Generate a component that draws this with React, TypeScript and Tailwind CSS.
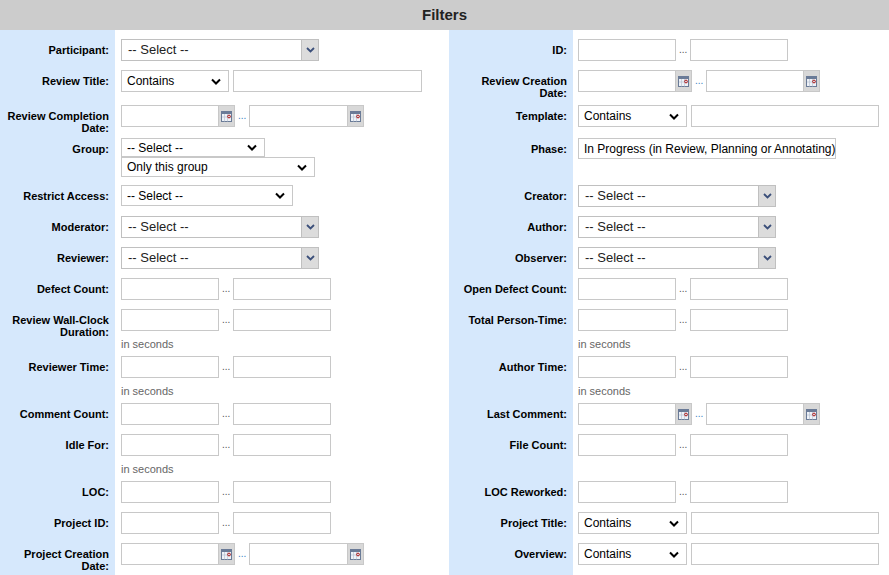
import React from "react";

const F = { fontFamily: '"Liberation Sans", Arial, sans-serif' };

const Txt = ({ w }: { w: number }) => (
  <div className="h-[22px] border border-[#c8c8c8] bg-white shrink-0" style={{ width: w }} />
);
const Dots = ({ blue }: { blue?: boolean }) => (
  <span className={`mx-[3px] text-[10px] leading-[22px] ${blue ? "text-[#3b7fc4]" : "text-[#555]"}`}>...</span>
);
const Range = () => (
  <div className="flex items-start">
    <Txt w={98} />
    <Dots />
    <Txt w={98} />
  </div>
);
const Cal = () => (
  <svg width="11" height="11" viewBox="0 0 11 11">
    <rect x="0.5" y="0.5" width="10" height="10" fill="#eef2f8" stroke="#6a7b97" />
    <rect x="0.5" y="0.5" width="10" height="2.5" fill="#6a7b97" />
    <path d="M3.5 3v7.5M6.5 3v7.5M1 6h9" stroke="#b9c3d3" strokeWidth="0.7" />
    <circle cx="8" cy="5.5" r="1.4" fill="none" stroke="#b01818" strokeWidth="1" />
  </svg>
);
const DateIn = ({ w }: { w: number }) => (
  <div className="flex h-[22px] border border-[#c8c8c8] bg-white shrink-0" style={{ width: w }}>
    <div className="flex-1" />
    <div className="w-[16px] h-full bg-[#d8d8d8] border-l border-[#c8c8c8] flex items-center justify-center">
      <Cal />
    </div>
  </div>
);
const DateRange = ({ a, b }: { a: number; b: number }) => (
  <div className="flex items-start">
    <DateIn w={a} />
    <Dots blue />
    <DateIn w={b} />
  </div>
);
const Chev = () => (
  <svg width="10" height="7" viewBox="0 0 10 7">
    <path d="M1 1.5l4 4 4-4" stroke="#000" strokeWidth="2" fill="none" />
  </svg>
);
const NSel = ({ w, text, h = 22 }: { w: number; text: string; h?: number }) => (
  <div
    className="flex items-center justify-between border border-[#c8c8c8] bg-white pl-[5px] pr-[7px] text-[12px] text-black shrink-0"
    style={{ width: w, height: h }}
  >
    <span className="whitespace-nowrap">{text}</span>
    <Chev />
  </div>
);
const CSel = ({ w }: { w: number }) => (
  <div className="flex h-[22px] border border-[#c0c0c0] bg-white shrink-0" style={{ width: w }}>
    <div className="flex-1 pl-[6px] text-[13px] leading-[20px] text-[#222]">-- Select --</div>
    <div className="w-[17px] h-full bg-[#dcdcdc] border-l border-[#c0c0c0] flex items-center justify-center">
      <svg width="9" height="6" viewBox="0 0 9 6">
        <path d="M1 1l3.5 3.5L8 1" stroke="#3b4f7a" strokeWidth="1.8" fill="none" />
      </svg>
    </div>
  </div>
);
const Secs = () => <div className="text-[11px] text-[#666] mt-[7px] leading-[13px]">in seconds</div>;
const Contains = ({ a, b }: { a: number; b: number }) => (
  <div className="flex gap-[4px]">
    <NSel w={a} text="Contains" />
    <Txt w={b} />
  </div>
);

type Row = { h: number; l: string; lf: React.ReactNode; r: string; rf: React.ReactNode };

const rows: Row[] = [
  { h: 31, l: "Participant:", lf: <CSel w={198} />, r: "ID:", rf: <Range /> },
  { h: 35, l: "Review Title:", lf: <Contains a={108} b={189} />, r: "Review Creation Date:", rf: <DateRange a={114} b={114} /> },
  { h: 33, l: "Review Completion Date:", lf: <DateRange a={114} b={115} />, r: "Template:", rf: <Contains a={109} b={188} /> },
  {
    h: 47,
    l: "Group:",
    lf: (
      <div className="flex flex-col">
        <NSel w={144} h={19} text="-- Select --" />
        <NSel w={194} h={20} text="Only this group" />
      </div>
    ),
    r: "Phase:",
    rf: <NSel w={258} h={21} text="In Progress (in Review, Planning or Annotating)" />,
  },
  { h: 31, l: "Restrict Access:", lf: <NSel w={172} h={21} text="-- Select --" />, r: "Creator:", rf: <CSel w={198} /> },
  { h: 31, l: "Moderator:", lf: <CSel w={198} />, r: "Author:", rf: <CSel w={198} /> },
  { h: 31, l: "Reviewer:", lf: <CSel w={198} />, r: "Observer:", rf: <CSel w={198} /> },
  { h: 31, l: "Defect Count:", lf: <Range />, r: "Open Defect Count:", rf: <Range /> },
  { h: 47, l: "Review Wall-Clock Duration:", lf: <div><Range /><Secs /></div>, r: "Total Person-Time:", rf: <div><Range /><Secs /></div> },
  { h: 47, l: "Reviewer Time:", lf: <div><Range /><Secs /></div>, r: "Author Time:", rf: <div><Range /><Secs /></div> },
  { h: 31, l: "Comment Count:", lf: <Range />, r: "Last Comment:", rf: <DateRange a={114} b={114} /> },
  { h: 47, l: "Idle For:", lf: <div><Range /><Secs /></div>, r: "File Count:", rf: <Range /> },
  { h: 31, l: "LOC:", lf: <Range />, r: "LOC Reworked:", rf: <Range /> },
  { h: 31, l: "Project ID:", lf: <Range />, r: "Project Title:", rf: <Contains a={109} b={188} /> },
  { h: 40, l: "Project Creation Date:", lf: <DateRange a={114} b={115} />, r: "Overview:", rf: <Contains a={109} b={188} /> },
];

const Label = ({ t, w }: { t: string; w: number }) => (
  <div className="bg-[#d6e8fc] shrink-0 text-right text-[11px] font-bold text-black leading-[12px] pr-[6px] pl-[4px] pt-[6px]" style={{ width: w }}>
    {t}
  </div>
);

export default function App() {
  return (
    <div style={F} className="w-[889px] h-[575px] overflow-hidden bg-white">
      <div className="h-[30px] bg-[#cccccc] flex items-center justify-center text-[15px] font-bold text-[#222]">Filters</div>
      <div className="h-[8px] flex">
        <div className="w-[115px] bg-[#d6e8fc]" />
        <div className="w-[334px]" />
        <div className="w-[124px] bg-[#d6e8fc]" />
      </div>
      {rows.map((r, i) => (
        <div key={i} className="flex" style={{ height: r.h }}>
          <Label t={r.l} w={115} />
          <div className="w-[334px] pl-[6px] pt-[1px]">{r.lf}</div>
          <Label t={r.r} w={124} />
          <div className="flex-1 pl-[5px] pt-[1px]">{r.rf}</div>
        </div>
      ))}
    </div>
  );
}
